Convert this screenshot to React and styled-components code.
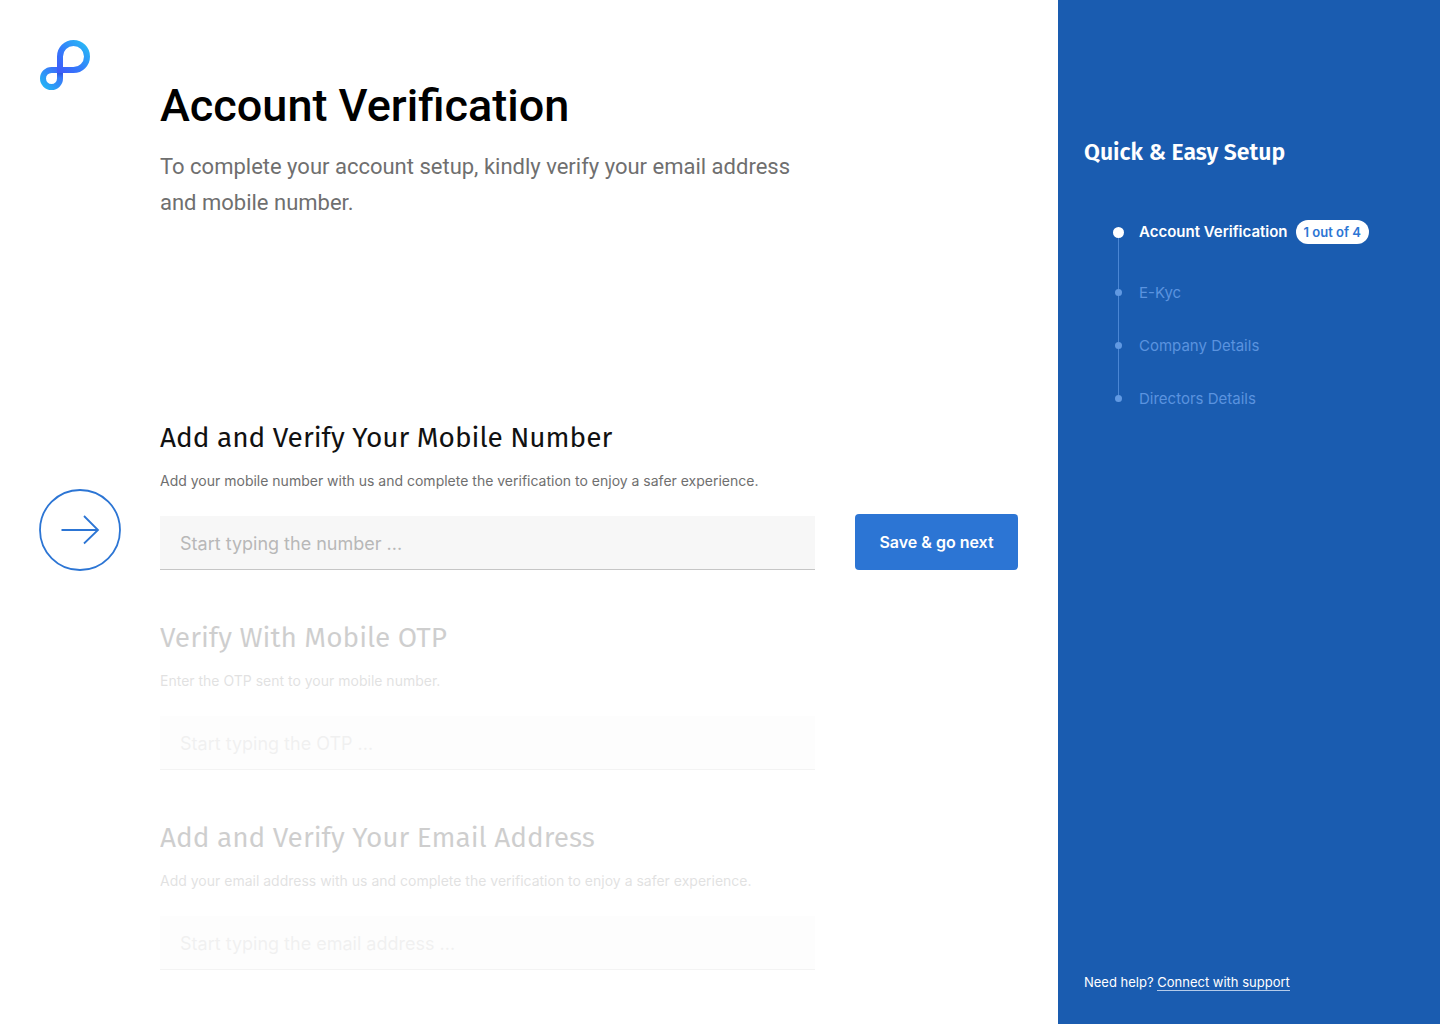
import React, { useId } from "react";
import styled, { createGlobalStyle } from "styled-components";

const GlobalStyle = createGlobalStyle`
  *, *::before, *::after { box-sizing: border-box; }
  body { margin: 0; background: #fff; }
`;

const inter = `Inter, "Liberation Sans", sans-serif`;
const roboto = `Roboto, "Liberation Sans", sans-serif`;
const humanist = `"Fira Sans", "Noto Sans", "Open Sans", sans-serif`;

const Page = styled.div`
  display: grid;
  grid-template-columns: minmax(0, 1fr) 382px;
  min-height: 100vh;
  font-family: ${inter};
`;

const Main = styled.main`
  padding: 40px;
`;

const Row = styled.div`
  display: grid;
  grid-template-columns: 80px minmax(0, 1fr) 163px;
  column-gap: 40px;
`;

const Intro = styled(Row)`
  margin-bottom: 199px;
`;

const IntroText = styled.header`
  padding-top: 37px;
`;

const Title = styled.h1`
  margin: 0 0 14px;
  font: 500 45px/58px ${roboto};
  color: #000;
`;

const Lead = styled.p`
  margin: 0;
  font: 400 22px/36px ${roboto};
  color: #6f6f6f;
`;

const Steps = styled.form`
  display: grid;
  row-gap: 50px;
`;

const StepRow = styled(Row)`
  align-items: end;
  opacity: ${(p) => (p.$active ? 1 : 0.2)};
`;

const Field = styled.div`
  grid-column: 2;
  display: flex;
  flex-direction: column;
`;

const FieldLabel = styled.label`
  margin-bottom: 14px;
  font: 400 28px/36px ${humanist};
  color: #111;
`;

const Hint = styled.p`
  margin: 0 0 24px;
  font-size: 14px;
  line-height: 22px;
  color: #6f6f6f;
`;

const TextInput = styled.input`
  width: 100%;
  height: 54px;
  padding: 2px 20px 0;
  border: 0;
  border-bottom: 1px solid #c6c6c6;
  border-radius: 0;
  background: #f7f7f7;
  font: 400 18px/24px ${inter};
  color: #111;
  &::placeholder { color: #b8b8b8; opacity: 1; }
`;

const SaveButton = styled.button`
  height: 56px;
  padding: 0;
  border: 0;
  border-radius: 4px;
  background: #2c75d4;
  color: #fff;
  font: 600 16px/24px ${inter};
  cursor: pointer;
`;

const PointerIcon = styled.svg`
  display: block;
  width: 80px;
  height: 80px;
  overflow: visible;
`;

const Sidebar = styled.aside`
  display: flex;
  flex-direction: column;
  padding: 136px 26px 30px;
  background: #1a5cb0;
  color: #fff;
`;

const SidebarTitle = styled.h2`
  margin: 0 0 30px;
  font: 600 23px/32px ${humanist};
`;

const Progress = styled.ol`
  margin: 0;
  padding: 0 0 0 28px;
  list-style: none;
`;

const ProgressItem = styled.li`
  display: flex;
  align-items: center;
  height: ${(p) => (p.$current ? 68 : 53)}px;
  font-size: 15px;
  line-height: 24px;
  font-weight: ${(p) => (p.$current ? 600 : 400)};
  color: ${(p) => (p.$current ? "#fff" : "#5a93df")};
`;

const Marker = styled.span`
  display: flex;
  flex-direction: column;
  align-items: center;
  align-self: stretch;
  width: 13px;
  margin-right: 14px;
`;

const Rail = styled.span`
  flex: 1;
  width: 1px;
  background: ${(p) => (p.$hidden ? "transparent" : "#4a86d4")};
`;

const Dot = styled.span`
  width: ${(p) => (p.$current ? 11 : 7)}px;
  height: ${(p) => (p.$current ? 11 : 7)}px;
  border-radius: 50%;
  background: ${(p) => (p.$current ? "#fff" : "#6199e2")};
`;

const Badge = styled.span`
  margin-left: 8px;
  padding: 0 8px;
  border-radius: 12px;
  background: #fff;
  color: #2c75d4;
  font-size: 13px;
  line-height: 24px;
`;

const Help = styled.p`
  margin: auto 0 0;
  font-size: 13px;
  line-height: 24px;
`;

const HelpLink = styled.a`
  border-bottom: 1px solid #b4cbea;
  color: inherit;
  text-decoration: none;
`;

function Logo() {
  const id = useId();
  return (
    <svg width="50" height="50" viewBox="0 0 50 50" role="img" aria-label="Home">
      <defs>
        <linearGradient id={`${id}large`} gradientUnits="userSpaceOnUse" x1="18" y1="32" x2="45" y2="6">
          <stop offset="0" stopColor="#3f5afa" />
          <stop offset="0.45" stopColor="#3579fb" />
          <stop offset="1" stopColor="#2ab2f6" />
        </linearGradient>
        <linearGradient id={`${id}small`} gradientUnits="userSpaceOnUse" x1="23" y1="27" x2="4" y2="46">
          <stop offset="0" stopColor="#3f5cfa" />
          <stop offset="0.45" stopColor="#3583f8" />
          <stop offset="1" stopColor="#25b0f5" />
        </linearGradient>
        <linearGradient id={`${id}shade`} gradientUnits="userSpaceOnUse" x1="0" y1="32" x2="0" y2="38">
          <stop offset="0" stopColor="#2440c4" stopOpacity="0.6" />
          <stop offset="1" stopColor="#2440c4" stopOpacity="0" />
        </linearGradient>
      </defs>
      <g fill="none" strokeWidth="6">
        <path stroke={`url(#${id}small)`} d="M20 30V38.5A8.5 8.5 0 1 1 11.5 30H20" />
        <path fill={`url(#${id}shade)`} stroke="none" d="M17 32h6v6h-6z" />
        <path stroke={`url(#${id}large)`} d="M20 30V16.5A13.5 13.5 0 1 1 33.5 30H17" />
      </g>
    </svg>
  );
}

function CurrentPointer() {
  return (
    <PointerIcon viewBox="0 0 80 80" fill="none" stroke="#2c75d4" strokeWidth="1.8" aria-hidden="true">
      <circle cx="40" cy="40" r="40" />
      <path d="M21.5 40H58M44 26 58 40 44 53.5" />
    </PointerIcon>
  );
}

const fields = [
  {
    id: "mobile",
    type: "tel",
    label: "Add and Verify Your Mobile Number",
    hint: "Add your mobile number with us and complete the verification to enjoy a safer experience.",
    placeholder: "Start typing the number ...",
  },
  {
    id: "otp",
    type: "text",
    label: "Verify With Mobile OTP",
    hint: "Enter the OTP sent to your mobile number.",
    placeholder: "Start typing the OTP ...",
  },
  {
    id: "email",
    type: "email",
    label: "Add and Verify Your Email Address",
    hint: "Add your email address with us and complete the verification to enjoy a safer experience.",
    placeholder: "Start typing the email address ...",
  },
];

const stages = ["Account Verification", "E-Kyc", "Company Details", "Directors Details"];

export default function App() {
  const activeField = 0;
  const activeStage = 0;
  return (
    <Page>
      <GlobalStyle />
      <Main>
        <Intro>
          <Logo />
          <IntroText>
            <Title>Account Verification</Title>
            <Lead>
              To complete your account setup, kindly verify your email address and mobile number.
            </Lead>
          </IntroText>
        </Intro>
        <Steps onSubmit={(e) => e.preventDefault()}>
          {fields.map((f, i) => (
            <StepRow key={f.id} $active={i === activeField}>
              {i === activeField && <CurrentPointer />}
              <Field>
                <FieldLabel htmlFor={f.id}>{f.label}</FieldLabel>
                <Hint id={`${f.id}-hint`}>{f.hint}</Hint>
                <TextInput
                  id={f.id}
                  type={f.type}
                  placeholder={f.placeholder}
                  aria-describedby={`${f.id}-hint`}
                  disabled={i !== activeField}
                />
              </Field>
              {i === activeField && <SaveButton type="submit">Save &amp; go next</SaveButton>}
            </StepRow>
          ))}
        </Steps>
      </Main>
      <Sidebar>
        <SidebarTitle>Quick &amp; Easy Setup</SidebarTitle>
        <Progress>
          {stages.map((name, i) => {
            const current = i === activeStage;
            return (
              <ProgressItem key={name} $current={current} aria-current={current ? "step" : undefined}>
                <Marker>
                  <Rail $hidden={i === 0} />
                  <Dot $current={current} />
                  <Rail $hidden={i === stages.length - 1} />
                </Marker>
                {name}
                {current && <Badge>{i + 1} out of {stages.length}</Badge>}
              </ProgressItem>
            );
          })}
        </Progress>
        <Help>
          Need help? <HelpLink href="#support">Connect with support</HelpLink>
        </Help>
      </Sidebar>
    </Page>
  );
}
